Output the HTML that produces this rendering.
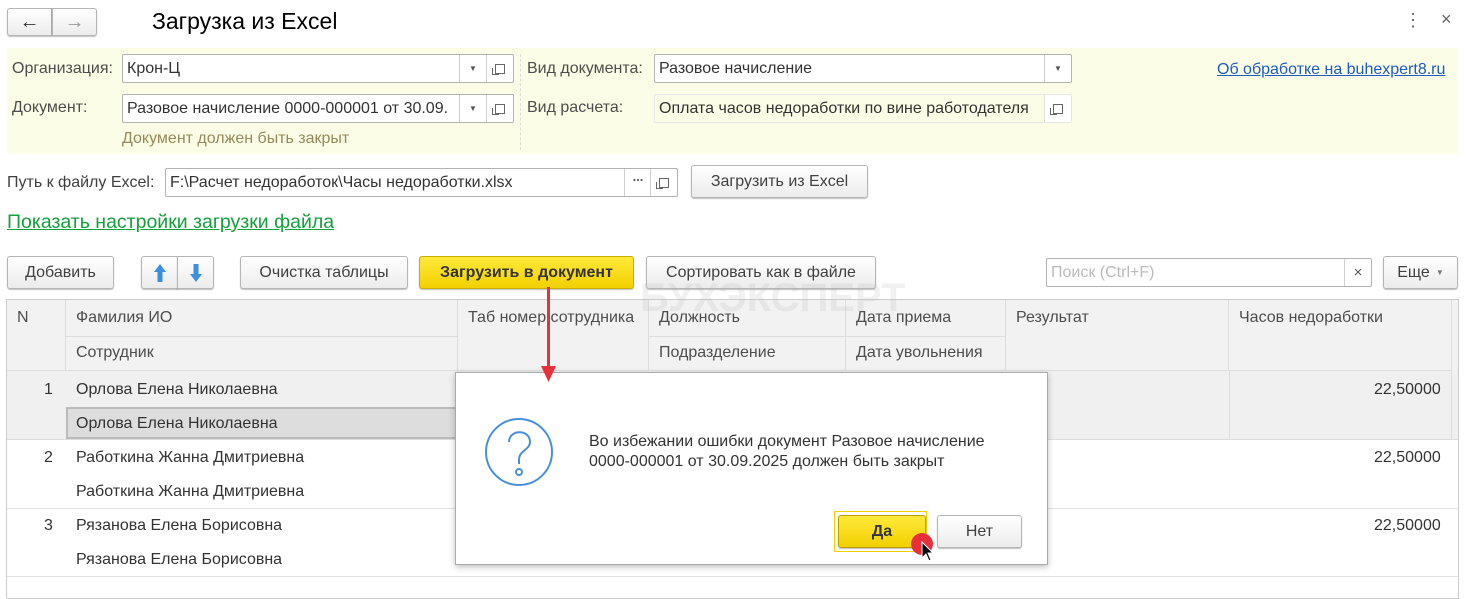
<!DOCTYPE html>
<html><head><meta charset="utf-8"><style>
*{box-sizing:border-box;margin:0;padding:0}
body{width:1468px;height:596px;position:relative;overflow:hidden;background:#fff;font-family:"Liberation Sans",Arial,sans-serif;font-size:16px;color:#333}
.a{position:absolute;white-space:nowrap}
.btn{position:absolute;border:1px solid #b5b5b5;border-radius:3px;background:linear-gradient(#fff,#ececec);box-shadow:0 1px 1px rgba(0,0,0,.25);display:flex;align-items:center;justify-content:center;color:#404040;font-size:16px}
.inp{position:absolute;border:1px solid #b3b3b3;border-radius:2px;background:#fff;height:29px;padding-left:4px;line-height:27px;font-size:16px;color:#333;overflow:hidden}
.dd{position:absolute;top:0;height:100%;border-left:1px solid #d0d0d0;width:27px;display:flex;align-items:center;justify-content:center;font-size:8px;color:#555}
.lbl{position:absolute;color:#4d4d4d;font-size:16px}
.th{position:absolute;background:#f2f2f2;border-right:1px solid #ddd;border-bottom:1px solid #ddd;color:#4d4d4d;padding:9px 10px;font-size:16px}
.td{position:absolute;font-size:16px;color:#333}
.cp{width:10px;height:10px;border:1px solid #666;position:relative}
.cp:after{content:"";position:absolute;left:-4px;top:3px;width:6px;height:6px;border-left:1px solid #666;border-bottom:1px solid #666}
</style></head><body>
<div class="btn" style="left:7px;top:8px;width:45px;height:28px;border-radius:3px 0 0 3px;font-size:20px;color:#333;font-weight:bold">&#8592;</div>
<div class="btn" style="left:52px;top:8px;width:45px;height:28px;border-radius:0 3px 3px 0;font-size:20px;color:#999;font-weight:bold">&#8594;</div>
<div class="a" style="left:152px;top:8px;font-size:23px;color:#000">Загрузка из Excel</div>
<div class="a" style="left:1404px;top:10px;font-size:18px;color:#666">&#8942;</div>
<div class="a" style="left:1441px;top:9px;font-size:18px;color:#666">×</div>
<div class="a" style="left:7px;top:48px;width:1451px;height:106px;background:#fbfde6"></div>
<div class="a" style="left:520px;top:54px;height:96px;border-left:1px dashed #ddd"></div>
<div class="lbl" style="left:12px;top:60px">Организация:</div>
<div class="inp" style="left:122px;top:54px;width:392px">Крон-Ц<div class="dd" style="right:27px">&#9660;</div><div class="dd" style="right:0"><div class="cp"></div></div></div>
<div class="lbl" style="left:12px;top:99px">Документ:</div>
<div class="inp" style="left:122px;top:94px;width:392px">Разовое начисление 0000-000001 от 30.09.<div class="dd" style="right:27px;background:#fff">&#9660;</div><div class="dd" style="right:0;background:#fff"><div class="cp"></div></div></div>
<div class="a" style="left:122px;top:130px;color:#958a5c;font-size:16px">Документ должен быть закрыт</div>
<div class="lbl" style="left:527px;top:60px">Вид документа:</div>
<div class="inp" style="left:654px;top:54px;width:418px">Разовое начисление<div class="dd" style="right:0">&#9660;</div></div>
<div class="lbl" style="left:527px;top:99px">Вид расчета:</div>
<div class="inp" style="left:654px;top:94px;width:418px;border-color:#e6e6e6;background:#fbfde6">Оплата часов недоработки по вине работодателя<div class="dd" style="right:0;background:#fff;border-color:#e0e0e0"><div class="cp"></div></div></div>
<div class="a" style="left:1217px;top:61px;color:#1f5bc0;text-decoration:underline;font-size:16px">Об обработке на buhexpert8.ru</div>
<div class="lbl" style="left:7px;top:174px;color:#404040">Путь к файлу Excel:</div>
<div class="inp" style="left:165px;top:168px;width:513px">F:\Расчет недоработок\Часы недоработки.xlsx<div class="dd" style="right:26px;font-size:13px;font-weight:bold;align-items:flex-end;padding-bottom:6px">...</div><div class="dd" style="right:0"><div class="cp"></div></div></div>
<div class="btn" style="left:691px;top:165px;width:177px;height:33px">Загрузить из Excel</div>
<div class="a" style="left:7px;top:211px;font-size:19.5px;color:#14a03c;text-decoration:underline">Показать настройки загрузки файла</div>
<div class="btn" style="left:7px;top:256px;width:107px;height:33px">Добавить</div>
<div class="btn" style="left:141px;top:256px;width:37px;height:33px;border-radius:3px 0 0 3px"><svg width="14" height="20"><path d="M7 1 L13 9 L9.5 9 L9.5 19 L4.5 19 L4.5 9 L1 9 Z" fill="#3b8fe0"/></svg></div>
<div class="btn" style="left:177px;top:256px;width:37px;height:33px;border-radius:0 3px 3px 0"><svg width="14" height="20"><path d="M7 19 L13 11 L9.5 11 L9.5 1 L4.5 1 L4.5 11 L1 11 Z" fill="#3b8fe0"/></svg></div>
<div class="btn" style="left:240px;top:256px;width:168px;height:33px">Очистка таблицы</div>
<div class="btn" style="left:419px;top:256px;width:215px;height:33px;background:linear-gradient(#ffe93a,#f2d000);border-color:#c9ad00;color:#333;font-weight:bold">Загрузить в документ</div>
<div class="btn" style="left:646px;top:256px;width:230px;height:33px">Сортировать как в файле</div>
<div class="inp" style="left:1046px;top:258px;width:326px;height:29px;color:#bbb">Поиск (Ctrl+F)<div class="dd" style="right:0;font-size:15px;color:#555">×</div></div>
<div class="btn" style="left:1383px;top:256px;width:75px;height:33px">Еще <span style="font-size:8px;margin-left:6px;color:#777">&#9660;</span></div>
<div class="a" style="left:6px;top:299px;width:1453px;height:300px;border:1px solid #ccc;background:#fff"></div>
<div class="th" style="left:7px;top:300px;width:59px;height:71px">N</div>
<div class="th" style="left:66px;top:300px;width:392px;height:37px">Фамилия ИО</div>
<div class="th" style="left:66px;top:337px;width:392px;height:34px;padding-top:7px">Сотрудник</div>
<div class="th" style="left:458px;top:300px;width:191px;height:71px">Таб номер сотрудника</div>
<div class="th" style="left:649px;top:300px;width:197px;height:37px">Должность</div>
<div class="th" style="left:649px;top:337px;width:197px;height:34px;padding-top:7px">Подразделение</div>
<div class="th" style="left:846px;top:300px;width:160px;height:37px">Дата приема</div>
<div class="th" style="left:846px;top:337px;width:160px;height:34px;padding-top:7px">Дата увольнения</div>
<div class="th" style="left:1006px;top:300px;width:223px;height:71px">Результат</div>
<div class="th" style="left:1229px;top:300px;width:223px;height:71px">Часов недоработки</div>
<div class="a" style="left:1452px;top:300px;width:6px;height:71px;background:#f2f2f2"></div>
<div class="a" style="left:7px;top:371px;width:1451px;height:69px;background:#f0f0f0;border-bottom:1px solid #ddd"></div>
<div class="a" style="left:1229px;top:371px;width:223px;height:69px;border-left:1px solid #ddd;border-right:1px solid #ddd"></div>
<div class="a" style="left:66px;top:407px;width:392px;height:32px;background:#ddd;border:2px solid #bbb"></div>
<div class="a" style="left:7px;top:508px;width:1451px;border-top:1px solid #e3e3e3"></div>
<div class="a" style="left:7px;top:576px;width:1451px;border-top:1px solid #e3e3e3"></div>
<div class="td" style="left:44px;top:381px">1</div>
<div class="td" style="left:76px;top:381px">Орлова Елена Николаевна</div>
<div class="td" style="left:76px;top:415px">Орлова Елена Николаевна</div>
<div class="td" style="left:1374px;top:381px">22,50000</div>
<div class="td" style="left:44px;top:449px">2</div>
<div class="td" style="left:76px;top:449px">Работкина Жанна Дмитриевна</div>
<div class="td" style="left:76px;top:483px">Работкина Жанна Дмитриевна</div>
<div class="td" style="left:1374px;top:449px">22,50000</div>
<div class="td" style="left:44px;top:517px">3</div>
<div class="td" style="left:76px;top:517px">Рязанова Елена Борисовна</div>
<div class="td" style="left:76px;top:551px">Рязанова Елена Борисовна</div>
<div class="td" style="left:1374px;top:517px">22,50000</div>
<div class="a" style="left:640px;top:276px;font-size:40px;font-weight:bold;color:rgba(180,180,180,.18)">БУХЭКСПЕРТ</div>
<div class="a" style="left:455px;top:372px;width:593px;height:193px;background:#fff;border:1px solid #aaa;box-shadow:0 2px 6px rgba(0,0,0,.25)"></div>
<svg class="a" style="left:479px;top:412px" width="80" height="80" viewBox="0 0 80 80"><circle cx="40" cy="40" r="33" fill="none" stroke="#4a90d9" stroke-width="2"/><path d="M30 30 C30 17 51 17 51 30 C51 38 40 38 40 48 L40 52" fill="none" stroke="#4a90d9" stroke-width="2"/><circle cx="40" cy="60" r="3" fill="none" stroke="#4a90d9" stroke-width="2"/></svg>
<div class="a" style="left:589px;top:432px;font-size:16px;color:#333;line-height:20px">Во избежании ошибки документ Разовое начисление<br>0000-000001 от 30.09.2025 должен быть закрыт</div>
<div class="a" style="left:834px;top:511px;width:93px;height:41px;border:1px solid #f0d000"></div>
<div class="btn" style="left:838px;top:515px;width:88px;height:33px;background:linear-gradient(#ffe93a,#f2d000);border-color:#b89e00;color:#333;font-weight:bold">Да</div>
<div class="btn" style="left:937px;top:515px;width:85px;height:33px">Нет</div>
<div class="a" style="left:911px;top:533px;width:22px;height:22px;border-radius:50%;background:#e8303a"></div>
<svg class="a" style="left:921px;top:541px" width="14" height="22" viewBox="0 0 14 22"><path d="M1 1 L1 17 L5 13 L8 20 L10 19 L7 12 L12 12 Z" fill="#000" stroke="#fff" stroke-width="1"/></svg>
<div class="a" style="left:547px;top:287px;width:3px;height:82px;background:#e8303a"></div>
<svg class="a" style="left:541px;top:366px" width="15" height="16"><path d="M0 0 L15 0 L7.5 16 Z" fill="#e8303a"/></svg>
</body></html>
